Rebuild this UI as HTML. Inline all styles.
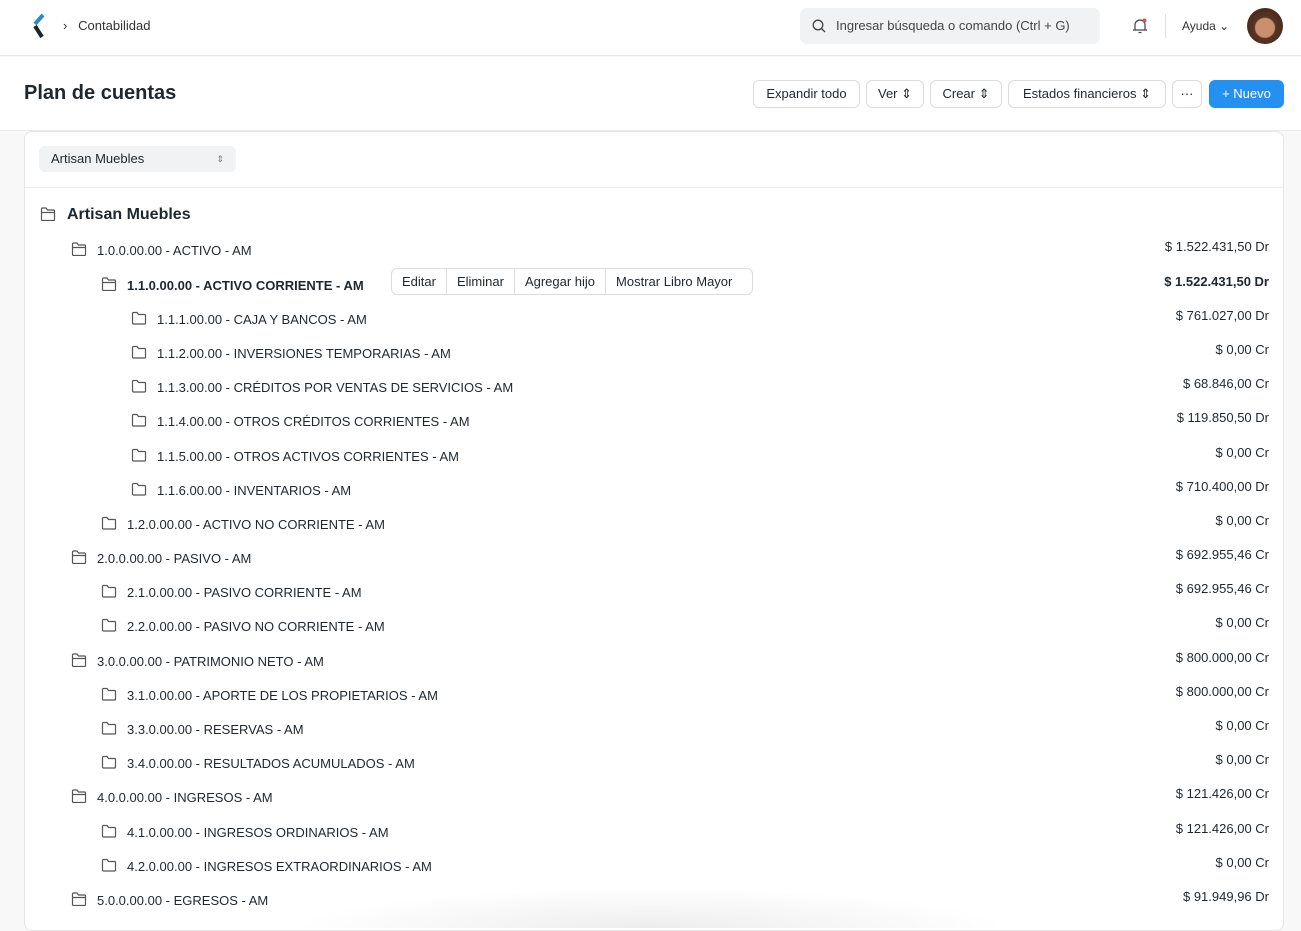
<!DOCTYPE html>
<html><head><meta charset="utf-8"><style>
*{box-sizing:border-box;margin:0;padding:0}
body{width:1301px;height:908px;overflow:hidden;background:#f8f8f8;font-family:"Liberation Sans",sans-serif;color:#1f272e;position:relative}
.nav{position:absolute;left:0;top:0;width:1301px;height:56px;background:#fff;border-bottom:1px solid #e8e8e8}
.ph{position:absolute;left:0;top:57px;width:1301px;height:74px;background:#fff;border-bottom:1px solid #ececec}
.btn{position:absolute;top:80px;height:28px;border:1px solid #dcdcdc;border-radius:6px;background:#fff;font-size:13px;line-height:26px;text-align:center;color:#1f272e}
.card{position:absolute;left:24px;top:131px;width:1260px;height:800px;background:#fff;border:1px solid #e6e6e6;border-radius:8px}
.row{position:absolute;font-size:13px;color:#1f272e;white-space:nowrap}
.amt{position:absolute;right:32px;font-size:13px;color:#1f272e;white-space:nowrap}
svg.f{position:absolute;width:16px;height:14px}
</style></head><body>
<div class="nav">
<svg style="position:absolute;left:30px;top:13px" width="16" height="26" viewBox="0 0 16 26"><path d="M13 2 L5 11" stroke="#2d8acb" stroke-width="4" fill="none"/><path d="M5 13 L12 24" stroke="#1f272e" stroke-width="4" fill="none"/></svg>
<div style="position:absolute;left:63px;top:18px;font-size:13px;color:#333">›&nbsp;&nbsp; Contabilidad</div>
<div style="position:absolute;left:800px;top:8px;width:300px;height:36px;background:#f1f2f4;border-radius:7px;font-size:13px;color:#444;line-height:36px;padding-left:36px">Ingresar búsqueda o comando (Ctrl + G)
<svg style="position:absolute;left:12px;top:11px" width="14" height="14" viewBox="0 0 14 14"><circle cx="6" cy="6" r="4.8" stroke="#444" stroke-width="1.3" fill="none"/><path d="M9.5 9.5L13 13" stroke="#444" stroke-width="1.3"/></svg></div>
<svg style="position:absolute;left:1131px;top:17px" width="18" height="18" viewBox="0 0 18 18"><path d="M4 13 L4 8 a5 5 0 0 1 10 0 V13 Z M2 13 H16 M7.5 15.5 h3" stroke="#444" stroke-width="1.2" fill="none"/><circle cx="13.5" cy="3.5" r="2" fill="#e24c4c"/></svg>
<div style="position:absolute;left:1165px;top:14px;width:1px;height:24px;background:#e2e2e2"></div>
<div style="position:absolute;left:1182px;top:19px;font-size:12px;color:#333">Ayuda ⌄</div>
<div style="position:absolute;left:1247px;top:8px;width:36px;height:36px;border-radius:50%;background:radial-gradient(circle at 50% 55%,#c98f6e 0 35%,#5a3422 40%,#3a2216 100%)"></div>
</div>
<div class="ph"><div style="position:absolute;left:24px;top:25px;font-size:20px;font-weight:bold">Plan de cuentas</div></div>
<div class="btn" style="left:753px;width:107px">Expandir todo</div>
<div class="btn" style="left:866px;width:58px">Ver ⇕</div>
<div class="btn" style="left:930px;width:72px">Crear ⇕</div>
<div class="btn" style="left:1008px;width:158px">Estados financieros ⇕</div>
<div class="btn" style="left:1172px;width:30px">···</div>
<div class="btn" style="left:1209px;width:75px;background:#2490ef;border-color:#2490ef;color:#fff">+ Nuevo</div>
<div class="card">
<div style="position:absolute;left:14px;top:14px;width:197px;height:26px;background:#f1f2f4;border-radius:6px;font-size:13px;line-height:26px;padding-left:12px">Artisan Muebles<span style="position:absolute;right:12px;font-size:9px;color:#777">⇕</span></div>
<div style="position:absolute;left:0;top:55px;width:1258px;height:1px;background:#ededed"></div>
</div>
<div id="tree"></div>
<svg class="f" style="left:40px;top:207px" viewBox="0 0 16 14"><path d="M1.5 12.5V2a1 1 0 0 1 1-1h3.5l1.5 2h6a1 1 0 0 1 1 1v8.5a1 1 0 0 1-1 1h-11a1 1 0 0 1-1-1zM1.5 5.5h13" stroke="#555" stroke-width="1.2" fill="none"/></svg>
<div class="row" style="left:67px;top:206px;font-size:16px;font-weight:bold">Artisan Muebles</div>
<div style="position:absolute;left:391px;top:268px;width:362px;height:27px;border:1px solid #dcdcdc;border-radius:6px;background:#fff;font-size:13px;line-height:25px;display:flex">
<span style="padding:0 10px;border-right:1px solid #dcdcdc">Editar</span><span style="padding:0 10px;border-right:1px solid #dcdcdc">Eliminar</span><span style="padding:0 10px;border-right:1px solid #dcdcdc">Agregar hijo</span><span style="padding:0 10px">Mostrar Libro Mayor</span></div>
<div style="position:absolute;left:290px;top:888px;width:720px;height:40px;background:radial-gradient(ellipse at 50% 100%,rgba(0,0,0,0.07),rgba(0,0,0,0) 70%)"></div>
<script>
var rows=[[250,0,"1.0.0.00.00 - ACTIVO - AM","$ 1.522.431,50 Dr",1],[285,1,"1.1.0.00.00 - ACTIVO CORRIENTE - AM","$ 1.522.431,50 Dr",1,1],[319,2,"1.1.1.00.00 - CAJA Y BANCOS - AM","$ 761.027,00 Dr"],[353,2,"1.1.2.00.00 - INVERSIONES TEMPORARIAS - AM","$ 0,00 Cr"],[387,2,"1.1.3.00.00 - CRÉDITOS POR VENTAS DE SERVICIOS - AM","$ 68.846,00 Cr"],[421,2,"1.1.4.00.00 - OTROS CRÉDITOS CORRIENTES - AM","$ 119.850,50 Dr"],[456,2,"1.1.5.00.00 - OTROS ACTIVOS CORRIENTES - AM","$ 0,00 Cr"],[490,2,"1.1.6.00.00 - INVENTARIOS - AM","$ 710.400,00 Dr"],[524,1,"1.2.0.00.00 - ACTIVO NO CORRIENTE - AM","$ 0,00 Cr"],[558,0,"2.0.0.00.00 - PASIVO - AM","$ 692.955,46 Cr",1],[592,1,"2.1.0.00.00 - PASIVO CORRIENTE - AM","$ 692.955,46 Cr"],[626,1,"2.2.0.00.00 - PASIVO NO CORRIENTE - AM","$ 0,00 Cr"],[661,0,"3.0.0.00.00 - PATRIMONIO NETO - AM","$ 800.000,00 Cr",1],[695,1,"3.1.0.00.00 - APORTE DE LOS PROPIETARIOS - AM","$ 800.000,00 Cr"],[729,1,"3.3.0.00.00 - RESERVAS - AM","$ 0,00 Cr"],[763,1,"3.4.0.00.00 - RESULTADOS ACUMULADOS - AM","$ 0,00 Cr"],[797,0,"4.0.0.00.00 - INGRESOS - AM","$ 121.426,00 Cr",1],[832,1,"4.1.0.00.00 - INGRESOS ORDINARIOS - AM","$ 121.426,00 Cr"],[866,1,"4.2.0.00.00 - INGRESOS EXTRAORDINARIOS - AM","$ 0,00 Cr"],[900,0,"5.0.0.00.00 - EGRESOS - AM","$ 91.949,96 Dr",1]];
var h="";rows.forEach(function(r){var x=71+r[1]*30;var open=r[4];var b=r[5]?"font-weight:bold;":"";
var p=open?"M1.5 12.5V2a1 1 0 0 1 1-1h3.5l1.5 2h6a1 1 0 0 1 1 1v8.5a1 1 0 0 1-1 1h-11a1 1 0 0 1-1-1zM1.5 5.5h13":"M1.5 12V2.5a1 1 0 0 1 1-1h3.5l1.5 2h6a1 1 0 0 1 1 1V12a1 1 0 0 1-1 1h-11a1 1 0 0 1-1-1z";
h+='<svg class="f" style="left:'+x+'px;top:'+(r[0]-8)+'px" viewBox="0 0 16 14"><path d="'+p+'" stroke="#555" stroke-width="1.2" fill="none"/></svg>';
h+='<div class="row" style="'+b+'left:'+(x+26)+'px;top:'+(r[0]-7)+'px">'+r[2]+'</div>';
h+='<div class="amt" style="'+b+'top:'+(r[0]-11)+'px">'+r[3]+'</div>';});
document.getElementById("tree").innerHTML=h;
</script>
</body></html>
